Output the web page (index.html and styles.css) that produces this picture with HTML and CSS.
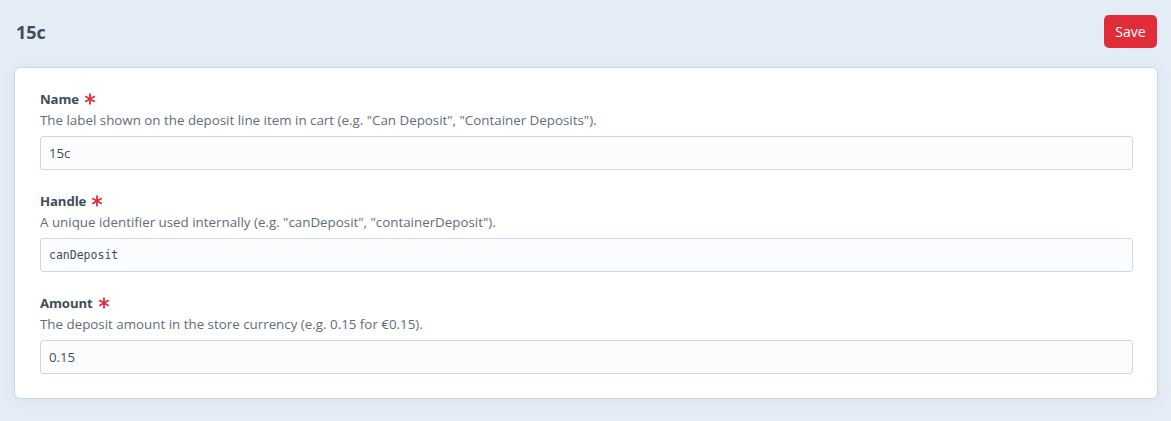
FILE: index.html
```html
<!DOCTYPE html>
<html lang="en">
<head>
<meta charset="utf-8">
<title>15c</title>
<link rel="stylesheet" href="styles.css">
</head>
<body>
<div class="page">
  <header class="header">
    <h1 class="title">15c</h1>
    <button class="btn-save" type="button">Save</button>
  </header>
  <main class="card">
    <div class="field">
      <div class="label">Name <svg class="req" viewBox="0 0 12 12" width="12" height="12"><g stroke="#e12d39" stroke-width="1.8" stroke-linecap="butt"><line x1="6" y1="0.5" x2="6" y2="11.5"/><line x1="1.2" y1="3.2" x2="10.8" y2="8.8"/><line x1="1.2" y1="8.8" x2="10.8" y2="3.2"/></g></svg></div>
      <div class="instructions">The label shown on the deposit line item in cart (e.g. "Can Deposit", "Container Deposits").</div>
      <div class="input">15c</div>
    </div>
    <div class="field">
      <div class="label">Handle <svg class="req" viewBox="0 0 12 12" width="12" height="12"><g stroke="#e12d39" stroke-width="1.8"><line x1="6" y1="0.5" x2="6" y2="11.5"/><line x1="1.2" y1="3.2" x2="10.8" y2="8.8"/><line x1="1.2" y1="8.8" x2="10.8" y2="3.2"/></g></svg></div>
      <div class="instructions">A unique identifier used internally (e.g. "canDeposit", "containerDeposit").</div>
      <div class="input mono">canDeposit</div>
    </div>
    <div class="field">
      <div class="label">Amount <svg class="req" viewBox="0 0 12 12" width="12" height="12"><g stroke="#e12d39" stroke-width="1.8"><line x1="6" y1="0.5" x2="6" y2="11.5"/><line x1="1.2" y1="3.2" x2="10.8" y2="8.8"/><line x1="1.2" y1="8.8" x2="10.8" y2="3.2"/></g></svg></div>
      <div class="instructions">The deposit amount in the store currency (e.g. 0.15 for €0.15).</div>
      <div class="input">0.15</div>
    </div>
  </main>
</div>
</body>
</html>
```

FILE: styles.css
```css
html, body {
  margin: 0;
  padding: 0;
}
body {
  background: #e4ecf6;
  font-family: "Open Sans", "Noto Sans", sans-serif;
  font-size: 14px;
  color: #3f4d5a;
  width: 1171px;
  height: 421px;
  overflow: hidden;
}
.page {
  padding: 15px 14px 0 15px;
}
.header {
  display: flex;
  align-items: center;
  justify-content: space-between;
  height: 33px;
  margin-bottom: 20px;
}
.title {
  margin: 0 0 0 1px;
  font-size: 18px;
  font-weight: 700;
  color: #3f4d5a;
}
.btn-save {
  width: 53px;
  height: 33px;
  border: none;
  border-radius: 5px;
  background: #e12d39;
  color: #fff;
  font-family: inherit;
  font-size: 14px;
  padding: 0;
}
.card {
  display: flex;
  flex-direction: column;
  gap: 21px;
  background: #fff;
  border-radius: 5px;
  box-shadow: 0 0 0 1px #cdd8e4, 0 2px 12px rgba(205, 216, 228, 0.5);
  padding: 21px 24px 24px 25px;
}
.field {
  display: flex;
  flex-direction: column;
}
.label {
  font-weight: 700;
  font-size: 13.2px;
  letter-spacing: -0.1px;
  line-height: 20px;
  display: flex;
  align-items: center;
  gap: 5px;
}
.req {
  display: block;
}
.instructions {
  color: #606d7b;
  line-height: 20px;
  margin: 1px 0 6px;
  font-size: 13.35px;
}
.input {
  height: 32px;
  box-sizing: content-box;
  border: 1px solid #cdd8e4;
  border-radius: 3px;
  background: #fbfcfe;
  padding: 0 8px;
  line-height: 32px;
  color: #3f4d5a;
  font-size: 13.2px;
}
.input.mono {
  font-family: "DejaVu Sans Mono", "Liberation Mono", monospace;
  font-size: 11.5px;
}
```
